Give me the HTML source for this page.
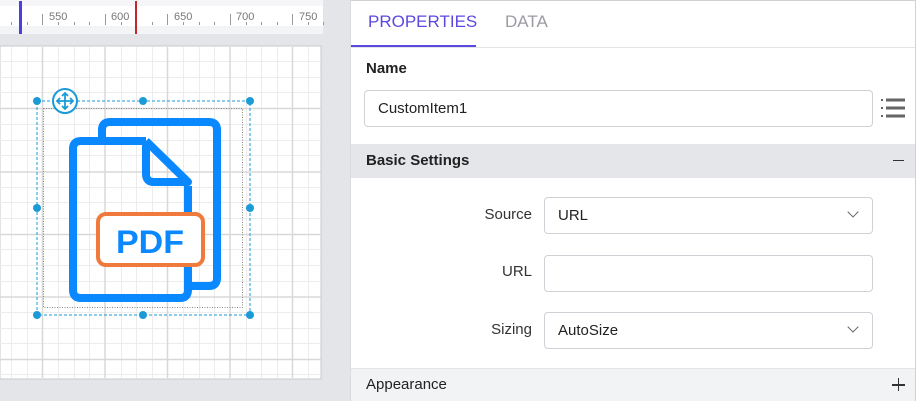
<!DOCTYPE html>
<html><head><meta charset="utf-8"><style>
*{margin:0;padding:0;box-sizing:border-box}
body{width:916px;height:401px;overflow:hidden;background:#e4e5e9;font-family:"Liberation Sans",Arial,sans-serif;position:relative}
.abs{position:absolute}
.panel{left:350px;top:0;width:566px;height:401px;background:#fff;border:1px solid #d0d1d5;border-left:1px solid #d9dadd}
.inp{position:absolute;background:#fff;border:1px solid #cfd1d6;border-radius:4px;font-size:15px;color:#222;padding-left:13px;display:flex;align-items:center}
.lbl{position:absolute;font-size:15px;color:#333;text-align:right;width:100px}
.chev{position:absolute;right:15px;top:10px;width:8px;height:8px;border-right:1.5px solid #666;border-bottom:1.5px solid #666;transform:rotate(45deg)}
</style></head><body>
<svg class="abs" style="left:0;top:0" width="350" height="401">
<rect x="0" y="0" width="323" height="26" fill="#fff"/>
<rect x="0" y="0" width="323" height="6" fill="#f6f6f8"/>
<rect x="0" y="26" width="323" height="8" fill="#f3f4f6"/>
<g fill="#777" font-size="11" font-family="Liberation Sans">
<text x="49" y="20">550</text><text x="111" y="20">600</text><text x="174" y="20">650</text><text x="236" y="20">700</text><text x="299" y="20">750</text></g>
<g stroke="#999" stroke-width="1">
<path d="M42.5 14V25M105.5 14V25M167.5 14V25M230.5 14V25M292.5 14V25"/>
<path d="M11.5 22V25M27.5 22V25M58.5 22V25M74.5 22V25M89.5 22V25M121.5 22V25M152.5 22V25M183.5 22V25M199.5 22V25M214.5 22V25M246.5 22V25M261.5 22V25M277.5 22V25M308.5 22V25M323.5 22V25"/></g>
<rect x="19" y="1" width="3" height="33" fill="#4c3fe0"/>
<rect x="135" y="1" width="2" height="33" fill="#c4262e"/>
<rect x="0" y="46" width="321" height="333" fill="#fff" stroke="#c8c9cc"/>
<g stroke="#ececec" stroke-width="1">
<path d="M11.5 47V378M27.5 47V378M58.5 47V378M74.5 47V378M89.5 47V378M121.5 47V378M136.5 47V378M152.5 47V378M183.5 47V378M199.5 47V378M214.5 47V378M246.5 47V378M261.5 47V378M277.5 47V378M308.5 47V378"/>
<path d="M0 61.5H321M0 77.5H321M0 92.5H321M0 124.5H321M0 140.5H321M0 155.5H321M0 187.5H321M0 202.5H321M0 218.5H321M0 249.5H321M0 265.5H321M0 281.5H321M0 312.5H321M0 328.5H321M0 343.5H321M0 374.5H321"/></g>
<g stroke="#d8d8d8" stroke-width="1.5">
<path d="M42.5 47V378M105 47V378M167.5 47V378M230 47V378M292.5 47V378"/>
<path d="M0 108.5H321M0 172H321M0 234.5H321M0 297H321M0 359.5H321"/></g>
<rect x="43.5" y="108.5" width="199" height="199" fill="none" stroke="#888" stroke-dasharray="1,1.5"/>
<rect x="37" y="101" width="213" height="214" fill="none" stroke="#1a9bd7" stroke-dasharray="3,2"/>
<g fill="#1a9bd7"><circle cx="37" cy="101" r="4"/><circle cx="143" cy="101" r="4"/><circle cx="250" cy="101" r="4"/><circle cx="37" cy="208" r="4"/><circle cx="250" cy="208" r="4"/><circle cx="37" cy="315" r="4"/><circle cx="143" cy="315" r="4"/><circle cx="250" cy="315" r="4"/></g>
<circle cx="65" cy="101" r="12" fill="#fff" stroke="#1a9bd7" stroke-width="2"/>
<g stroke="#1a9bd7" stroke-width="1.8" fill="none"><path d="M65 93V109M57 101H73"/><path d="M62 96L65 93L68 96M62 106L65 109L68 106M60 98L57 101L60 104M70 98L73 101L70 104"/></g>
<g fill="none" stroke="#0a88ff" stroke-width="8" stroke-linejoin="round">
<path d="M102 140V130Q102 122 110 122H209Q217 122 217 130V278Q217 286 209 286H188"/>
<path d="M146 141H81Q73 141 73 149V290Q73 298 81 298H180Q188 298 188 290V186"/>
<path d="M146 141V174Q146 182 154 182H188L146 141"/></g>
<rect x="98" y="214" width="105" height="51" rx="8" fill="#fff" stroke="#ef7a3b" stroke-width="4"/>
<text x="150" y="253" text-anchor="middle" font-size="32" font-weight="bold" fill="#0a88ff" font-family="Liberation Sans" textLength="68" lengthAdjust="spacingAndGlyphs">PDF</text>
</svg>
<div class="abs panel">
<div class="abs" style="left:17px;top:11px;font-size:17px;color:#5b48e0">PROPERTIES</div>
<div class="abs" style="left:154px;top:11px;font-size:17px;color:#9a9ba3">DATA</div>
<div class="abs" style="left:0;top:44px;width:125px;height:2px;background:#5b48e0"></div>
<div class="abs" style="left:0;top:46px;width:564px;height:1px;background:#e3e4e7"></div>
<div class="abs" style="left:15px;top:59px;font-size:15px;font-weight:bold;color:#222">Name</div>
<div class="inp" style="left:13px;top:89px;width:509px;height:37px">CustomItem1</div>
<svg class="abs" style="left:528px;top:95px" width="28" height="24"><g fill="#666"><rect x="2" y="3" width="2" height="2"/><rect x="2" y="11" width="2" height="2"/><rect x="2" y="19" width="2" height="2"/><rect x="7" y="2.5" width="19" height="3"/><rect x="7" y="10.5" width="19" height="3"/><rect x="7" y="18.5" width="19" height="3"/></g></svg>
<div class="abs" style="left:0;top:143px;width:564px;height:34px;background:#e5e6ea"></div>
<div class="abs" style="left:15px;top:151px;font-size:15px;font-weight:bold;color:#222">Basic Settings</div>
<div class="abs" style="left:542px;top:159px;width:11px;height:1px;background:#333"></div>
<div class="lbl" style="left:81px;top:205px">Source</div>
<div class="inp" style="left:193px;top:196px;width:329px;height:37px">URL<div class="chev"></div></div>
<div class="lbl" style="left:81px;top:262px">URL</div>
<div class="inp" style="left:193px;top:254px;width:329px;height:37px"></div>
<div class="lbl" style="left:81px;top:320px">Sizing</div>
<div class="inp" style="left:193px;top:311px;width:329px;height:37px">AutoSize<div class="chev"></div></div>
<div class="abs" style="left:0;top:367px;width:564px;height:33px;background:#f2f3f5;border-top:1px solid #e3e4e7"></div>
<div class="abs" style="left:15px;top:375px;font-size:15px;color:#222">Appearance</div>
<div class="abs" style="left:541px;top:383px;width:13px;height:1.5px;background:#333"></div>
<div class="abs" style="left:546.5px;top:377px;width:1.5px;height:13px;background:#333"></div>
</div>
</body></html>
